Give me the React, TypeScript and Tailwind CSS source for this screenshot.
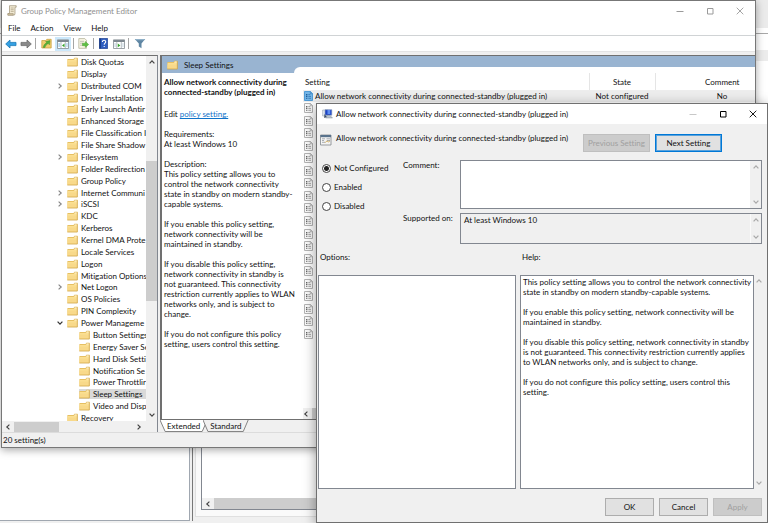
import React from "react";

type TreeNode = { label: string; level: 1 | 2; mark?: "closed" | "open"; selected?: boolean };

const tree: TreeNode[] = [
  { label: "Disk Quotas", level: 1 },
  { label: "Display", level: 1 },
  { label: "Distributed COM", level: 1, mark: "closed" },
  { label: "Driver Installation", level: 1 },
  { label: "Early Launch Antir", level: 1 },
  { label: "Enhanced Storage", level: 1 },
  { label: "File Classification I", level: 1 },
  { label: "File Share Shadow", level: 1 },
  { label: "Filesystem", level: 1, mark: "closed" },
  { label: "Folder Redirection", level: 1 },
  { label: "Group Policy", level: 1 },
  { label: "Internet Communi", level: 1, mark: "closed" },
  { label: "iSCSI", level: 1, mark: "closed" },
  { label: "KDC", level: 1 },
  { label: "Kerberos", level: 1 },
  { label: "Kernel DMA Prote", level: 1 },
  { label: "Locale Services", level: 1 },
  { label: "Logon", level: 1 },
  { label: "Mitigation Options", level: 1 },
  { label: "Net Logon", level: 1, mark: "closed" },
  { label: "OS Policies", level: 1 },
  { label: "PIN Complexity", level: 1 },
  { label: "Power Manageme", level: 1, mark: "open" },
  { label: "Button Settings", level: 2 },
  { label: "Energy Saver Se", level: 2 },
  { label: "Hard Disk Setti", level: 2 },
  { label: "Notification Se", level: 2 },
  { label: "Power Throttlir", level: 2 },
  { label: "Sleep Settings", level: 2, selected: true },
  { label: "Video and Disp", level: 2 },
  { label: "Recovery", level: 1 },
];

const settingName = "Allow network connectivity during connected-standby (plugged in)";

const rotations = { up: "", down: "rotate-180", left: "-rotate-90", right: "rotate-90" };

function Arrow({ dir, className = "" }: { dir: keyof typeof rotations; className?: string }) {
  return (
    <svg viewBox="0 0 6 6" className={`size-[6px] shrink-0 ${rotations[dir]} ${className}`} fill="none" stroke="currentColor" strokeWidth="1.2">
      <path d="M0.6 4.4 3 1.8l2.4 2.6" />
    </svg>
  );
}

function Folder({ className = "" }: { className?: string }) {
  return (
    <svg viewBox="0 0 11 10" className={`h-[10px] w-[11px] shrink-0 ${className}`}>
      <path d="M.5 2h6l1-1.2h3V9H.5z" fill="#dfb652" />
      <path d="M.5 2.8h6.3l1-1h2.2V8.6H.5z" fill="#fbdf92" />
      <path d="M.5 4.6h9.5v4H.5z" fill="#f8d98a" />
      <path d="M.3 9.1h10V1.2" fill="none" stroke="#d3a848" strokeWidth=".7" />
      <path d="M7.5 1.9h2.2" stroke="#fff" strokeWidth=".7" />
    </svg>
  );
}

function SettingIcon({ selected }: { selected?: boolean }) {
  const line = selected ? "#2c74b3" : "#8d8d8d";
  return (
    <svg viewBox="0 0 9 10" className="h-[10px] w-[9px] shrink-0">
      <path d="M.5.5h6l2 2v7h-8z" fill={selected ? "#74b5e6" : "#fafafa"} stroke={selected ? "#4f9bd6" : "#b4b4b4"} />
      <path d="M6.3.5v2.2h2.2" fill="none" stroke={line} strokeWidth=".6" />
      <path d="M2 3.6h1.4M2 5.4h1.4M2 7.3h1.4" stroke={selected ? "#1c5d99" : "#666"} strokeWidth="1.1" />
      <path d="M4.3 3.6h2M4.3 5.4h2.7M4.3 7.3h2.7" stroke={line} strokeWidth=".8" />
    </svg>
  );
}

function Caption({ muted }: { muted?: boolean }) {
  const c = muted ? "text-[#9a9a9a]" : "text-black";
  return (
    <div className={`flex items-center gap-[22px] ${c}`}>
      <button aria-label="Minimize" className={`grid size-[8px] place-items-center ${muted ? "" : "text-[#c8c8c8]"}`}>
        <svg viewBox="0 0 8 8" className="size-[8px]" stroke="currentColor"><path d="M.5 4.5h7" /></svg>
      </button>
      <button aria-label="Maximize" className="grid size-[8px] place-items-center">
        <svg viewBox="0 0 8 8" className="size-[8px]" fill="none" stroke="currentColor"><path d="M1.5 1.500h5.500v5.500H1.500z" /></svg>
      </button>
      <button aria-label="Close" className="grid size-[8px] place-items-center">
        <svg viewBox="0 0 8 8" className="size-[8px]" stroke="currentColor" strokeWidth=".9"><path d="m.7.7 6.6 6.6M7.3.7.7 7.3" /></svg>
      </button>
    </div>
  );
}

function Toolbar() {
  const sep = <span className="h-[11px] w-px bg-[#a5a5a5]" />;
  return (
    <div className="flex h-[16px] shrink-0 items-center gap-[3px] border-b border-[#e4e4e4] bg-white pl-[3px]">
      <button aria-label="Back">
        <svg viewBox="0 0 12 10" className="h-[10px] w-[12px]"><path d="M.7 5 5 1v2.4h6v3.2H5V9z" fill="#35a0e2" stroke="#1979b8" strokeWidth=".8" /></svg>
      </button>
      <button aria-label="Forward">
        <svg viewBox="0 0 12 10" className="h-[10px] w-[12px]"><path d="M11.3 5 7 1v2.4H1v3.2h6V9z" fill="#8a8a8a" stroke="#6d6d6d" strokeWidth=".8" /></svg>
      </button>
      {sep}
      <button aria-label="Up one level" className="pl-[2px]">
        <svg viewBox="0 0 11 11" className="size-[11px]">
          <path d="M.8 2.5h4l1-1.2h4.4V10H.8z" fill="#f0cd70" stroke="#c79c38" strokeWidth=".7" />
          <path d="M2.2 9.5c.5-2.5 1.500-3.800 3.500-4.700L4.600 3.500l4.400-.9-.6 4.200-1.200-1.200C5.500 6.500 4.600 7.500 4 9.500z" fill="#56b13a" stroke="#398a22" strokeWidth=".4" />
        </svg>
      </button>
      <button aria-label="Show or hide tree" className="-mr-px grid h-[14px] w-[16px] place-items-center bg-[#cce8fb]">
        <svg viewBox="0 0 12 10" className="h-[10px] w-[12px]">
          <path d="M.5.8h11v8.700H.5z" fill="#fff" stroke="#838b92" strokeWidth=".8" /><path d="M.5 1h11v2H.5z" fill="#7e8890" />
          <path d="M4 3v6.500M8.300 3v6.500" stroke="#9aa3aa" strokeWidth=".7" /><path d="M1.300 5h1.800M1.300 7h1.800M9.200 5h1.500M9.200 7h1.500" stroke="#4da0d8" strokeWidth=".8" /><path d="M7.500 4.600v3.600L5 6.400z" fill="#35a52a" />
        </svg>
      </button>
      {sep}
      <button aria-label="Export list" className="px-px">
        <svg viewBox="0 0 11 11" className="size-[11px]">
          <path d="M.8.600h6l1.700 1.700v8H.8z" fill="#fbf8e6" stroke="#aaa78f" strokeWidth=".7" /><path d="M2 3.300h4M2 5.200h3M2 7.200h3" stroke="#a9a9a0" strokeWidth=".7" />
          <path d="M4.500 5.200h2.800V3.400l3.400 3.100-3.400 3V7.700H4.500z" fill="#5fc043" stroke="#3b9427" strokeWidth=".4" />
        </svg>
      </button>
      {sep}
      <button aria-label="Help" className="pl-[2px]">
        <svg viewBox="0 0 9 11" className="h-[11px] w-[9px]">
          <path d="M.4.400h8.200v10.200H.4z" fill="#2e5dc0" stroke="#1b3d8c" strokeWidth=".7" /><path d="M.4.400h1.400v10.200H.4z" fill="#16367f" />
          <path d="M3.400 3.900c0-2.300 3.300-2.200 3.300-.1 0 1.400-1.500 1.400-1.500 3M5.200 7.900v1.100" fill="none" stroke="#fff" strokeWidth="1.100" />
        </svg>
      </button>
      <button aria-label="Show or hide action pane" className="pl-[2px]">
        <svg viewBox="0 0 12 10" className="h-[10px] w-[12px]">
          <path d="M.5.8h11v8.700H.5z" fill="#fff" stroke="#838b92" strokeWidth=".8" /><path d="M.5 1h11v2H.5z" fill="#7e8890" />
          <path d="M3.800 3v6.500M8.300 3v6.500" stroke="#9aa3aa" strokeWidth=".7" /><path d="M1.300 5h1.800M1.300 7h1.800M9.200 5h1.500M9.200 7h1.500" stroke="#9ab7cc" strokeWidth=".8" /><path d="M4.800 4.600v3.600l2.500-1.800z" fill="#35a52a" />
        </svg>
      </button>
      {sep}
      <button aria-label="Filter" className="pl-[2px]">
        <svg viewBox="0 0 12 11" className="h-[11px] w-[12px]"><path d="M.8 1h10.400L7.500 5.500v4.700L4.800 8.500v-3z" fill="#5f86a3" /><path d="M.8 1h10.400l-1 1.300H1.900z" fill="#8fb0c8" /></svg>
      </button>
    </div>
  );
}

function TreePane() {
  return (
    <nav className="flex w-[156px] shrink-0 flex-col border-t border-r border-[#828790] border-t-[#707070] bg-white">
      <div className="flex min-h-0 flex-1">
        <div className="min-w-0 flex-1 overflow-hidden">
          <ul className="grid h-[368px] auto-rows-fr">
            {tree.map((n) => (
              <li key={n.label} className={`flex min-h-0 items-center ${n.level === 1 ? "pl-[55px]" : "pl-[67px]"}`}>
                <span className="w-[10px] shrink-0">
                  {n.mark && <Arrow dir={n.mark === "open" ? "down" : "right"} className={n.mark === "open" ? "text-[#333]" : "text-[#888]"} />}
                </span>
                <span className={`flex items-center gap-[3px] ${n.selected ? "flex-1 bg-[#d9d9d9]" : ""}`}>
                  <Folder />
                  <span className="whitespace-nowrap">{n.label}</span>
                </span>
              </li>
            ))}
          </ul>
        </div>
        <div className="flex w-[11px] flex-col items-center justify-between bg-[#f0f0f0] py-[3px] text-[#444]">
          <Arrow dir="up" />
          <span className="mt-[96px] mb-auto h-[140px] w-full bg-[#cdcdcd]" />
          <Arrow dir="down" />
        </div>
      </div>
      <div className="flex h-[11px] items-center bg-[#f0f0f0] px-[3px] text-[#444]">
        <Arrow dir="left" />
        <span className="ml-[3px] h-[10px] w-[45px] bg-[#cdcdcd]" />
        <Arrow dir="right" className="mr-[12px] ml-auto" />
      </div>
    </nav>
  );
}

function Description() {
  return (
    <article className="flex w-[141px] shrink-0 flex-col gap-[10px] pt-[4px] pl-[2px]">
      <h2 className="mb-[2px] font-bold">
        Allow network connectivity during<br />connected-standby (plugged in)
      </h2>
      <p>Edit <a href="#policy" className="text-[#0f72c9] underline">policy setting.</a></p>
      <p>Requirements:<br />At least Windows 10</p>
      <p>Description:<br />This policy setting allows you to<br />control the network connectivity<br />state in standby on modern standby-<br />capable systems.</p>
      <p>If you enable this policy setting,<br />network connectivity will be<br />maintained in standby.</p>
      <p>If you disable this policy setting,<br />network connectivity in standby is<br />not guaranteed. This connectivity<br />restriction currently applies to WLAN<br />networks only, and is subject to<br />change.</p>
      <p>If you do not configure this policy<br />setting, users control this setting.</p>
    </article>
  );
}

function SettingsTable() {
  return (
    <div className="flex min-w-0 flex-1 flex-col">
      <table className="w-full table-fixed border-collapse">
        <colgroup><col /><col className="w-[66px]" /><col className="w-[100px]" /></colgroup>
        <thead>
          <tr className="h-[17px]">
            <th className="border-r border-[#e5e5e5] pt-0 pl-[2px] text-left font-normal">Setting</th>
            <th className="border-r border-[#e5e5e5] text-center font-normal">State</th>
            <th className="pl-[34px] text-center font-normal">Comment</th>
          </tr>
        </thead>
        <tbody>
          <tr className="h-[12px] bg-[#ededed]">
            <td>
              <span className="flex items-center gap-[2px] pl-px"><SettingIcon selected /><span className="whitespace-nowrap">{settingName}</span></span>
            </td>
            <td className="text-center">Not configured</td>
            <td className="pl-[34px] text-center">No</td>
          </tr>
        </tbody>
      </table>
      <div className="grid h-[238px] auto-rows-fr pl-px">
        {Array.from({ length: 19 }, (_, i) => <span key={i} className="flex items-center"><SettingIcon /></span>)}
      </div>
      <div className="mt-auto flex h-[11px] items-center bg-[#f0f0f0] text-[#444]">
        <Arrow dir="left" />
        <span className="ml-[3px] h-full flex-1 bg-[#cdcdcd]" />
      </div>
    </div>
  );
}

function EditorWindow() {
  return (
    <section className="absolute top-0 right-[12px] bottom-[75px] left-px flex flex-col border border-[#777] bg-[#f0f0f0] shadow-[0_2px_8px_rgba(0,0,0,0.35)]">
      <header className="flex h-[19px] shrink-0 items-center bg-white pr-[11px] pl-[5px] text-[#8f8f8f]">
        <svg viewBox="0 0 10 11" className="mr-[4px] h-[11px] w-[10px]">
          <path d="M2.500.700h6.700v1.500H8v6.300l-.5 1.500H1V8.500h1.500z" fill="#f1ead4" stroke="#9c8f76" strokeWidth=".7" />
          <path d="M3.700 3h3M3.700 4.700h3M3.700 6.400h3" stroke="#a99c80" strokeWidth=".7" /><path d="M.8 8.500h5.400v1.800H.8z" fill="#cdbf9d" stroke="#9c8f76" strokeWidth=".5" />
        </svg>
        <h1 className="mr-auto">Group Policy Management Editor</h1>
        <Caption muted />
      </header>
      <nav className="flex h-[16px] shrink-0 items-center gap-[10px] border-b border-[#d0d3d5] bg-white pl-[6px]">
        <button>File</button><button>Action</button><button>View</button><button>Help</button>
      </nav>
      <Toolbar />
      <div className="flex min-h-0 flex-1 gap-[2px] pt-[3px]">
        <TreePane />
        <main className="flex min-w-0 flex-1 flex-col">
          <div className="flex min-h-0 flex-1 flex-col border-t border-b border-l-2 border-[#707070] bg-white">
            <div className="flex h-[17px] shrink-0 bg-[#99b4d1]">
              <div className="flex w-[132px] items-center gap-[6px] pl-[5px]"><Folder /><h2>Sleep Settings</h2></div>
              <div className="mt-[11px] flex-1 rounded-tl-[6px] bg-white" />
            </div>
            <div className="flex min-h-0 flex-1"><Description /><SettingsTable /></div>
          </div>
          <div className="flex h-[12px] shrink-0">
            <Tab label="Extended" active /><Tab label="Standard" />
          </div>
        </main>
      </div>
      <footer className="h-[15px] shrink-0 border-t border-[#dcdcdc] pl-px leading-[15px]">20 setting(s)</footer>
    </section>
  );
}

function Tab({ label, active }: { label: string; active?: boolean }) {
  return (
    <button className="relative isolate -mr-[4px] h-[12px] px-[7px] leading-[12px]">
      <svg viewBox="0 0 46 12" preserveAspectRatio="none" className="absolute inset-0 -z-10 size-full">
        <path d="M0 0 5 11.500h36L46 0" fill={active ? "#fff" : "#f0f0f0"} stroke="#777" strokeWidth=".9" />
      </svg>
      {label}
    </button>
  );
}

function Scroll({ className = "" }: { className?: string }) {
  return (
    <div className={`flex shrink-0 flex-col items-center justify-between bg-[#f0f0f0] text-[#a8a8a8] ${className}`}>
      <Arrow dir="up" /><Arrow dir="down" />
    </div>
  );
}

const pushButton = "h-[18px] border border-[#adadad] bg-[#e1e1e1] disabled:border-[#bfbfbf] disabled:bg-[#cccccc] disabled:text-[#a0a0a0]";

function PolicyDialog() {
  return (
    <section role="dialog" aria-labelledby="dialog-title" className="absolute top-[103px] right-0 bottom-0 left-[316px] flex flex-col border border-[#707070] bg-[#f0f0f0] shadow-[0_3px_12px_rgba(0,0,0,0.4)]">
      <header className="flex h-[20px] shrink-0 items-center bg-white pr-[10px] pl-[5px]">
        <svg viewBox="0 0 11 10" className="mr-[3px] h-[10px] w-[11px]">
          <path d="M.6 1h5.500v6H.6z" fill="#dfe6ee" stroke="#9aa7b5" strokeWidth=".6" /><path d="M3 .700h6.800v5.500H3z" fill="#1c43c4" stroke="#8fa0b8" strokeWidth=".6" />
          <path d="M5.500 1h2.800v4H5.500z" fill="#5f8ef0" /><path d="M5.300 6.300h2.600L10.500 9H3.700z" fill="#b9c3ce" stroke="#6d7885" strokeWidth=".4" /><path d="m2.400 5 2.300 3-2.500 1z" fill="#3a4c66" />
        </svg>
        <h2 id="dialog-title" className="mr-auto">{settingName}</h2>
        <Caption />
      </header>
      <div className="flex shrink-0 items-start pt-[10px] pr-[45px] pl-[3px]">
        <svg viewBox="0 0 12 12" className="mr-[4px] size-[12px]">
          <path d="M.5 1h10.500v10H.5z" fill="#f4f4f4" stroke="#80868c" strokeWidth=".8" /><path d="M.5 1h10.500v2.200H.5z" fill="#59728c" />
          <path d="M2 4.800h3M2 6.500h2M2 8.300h3M6.500 4.800H10M7 6.500h3" stroke="#a0a6ac" strokeWidth=".9" /><path d="m5 8.800 2-2 1.300 1.300L10 6.800" fill="none" stroke="#c7a047" strokeWidth=".8" />
        </svg>
        <p className="mr-auto leading-[8px]">{settingName}</p>
        <div className="flex gap-[5px]">
          <button disabled className={`${pushButton} w-[67px]`}>Previous Setting</button>
          <button className="h-[18px] w-[67px] border border-[#0078d7] bg-[#e1e1e1] ring-1 ring-[#0078d7]/60 ring-inset">Next Setting</button>
        </div>
      </div>
      <div className="flex shrink-0 gap-x-[8px] pt-[8px] pr-[5px] pl-[5px]">
        <fieldset className="flex w-[73px] flex-col gap-[7px] pt-[2px]">
          {["Not Configured", "Enabled", "Disabled"].map((s, i) => (
            <label key={s} className="flex h-[12px] items-center gap-[3px] whitespace-nowrap">
              <input type="radio" name="state" defaultChecked={i === 0} className="size-[9px] shrink-0 appearance-none rounded-full border border-[#444] bg-white checked:bg-[radial-gradient(circle,#222_2px,#fff_3px)]" />
              {s}
            </label>
          ))}
        </fieldset>
        <div className="grid flex-1 grid-cols-[57px_1fr] gap-y-[4px]">
          <label htmlFor="comment">Comment:</label>
          <div className="flex h-[49px] border border-[#828790]">
            <textarea id="comment" className="h-full min-w-0 flex-1 resize-none overflow-hidden bg-white px-[3px] outline-none" />
            <Scroll className="w-[11px] py-[3px]" />
          </div>
          <label htmlFor="supported">Supported on:</label>
          <div className="flex h-[31px] border border-[#828790]">
            <textarea id="supported" readOnly defaultValue="At least Windows 10" className="h-full min-w-0 flex-1 resize-none overflow-hidden px-[3px] py-px outline-none" />
            <Scroll className="w-[11px] border-l border-[#fafafa] py-[3px]" />
          </div>
        </div>
      </div>
      <div className="grid min-h-0 flex-1 grid-cols-[198px_1fr] grid-rows-[23px_1fr] gap-x-[4px] pt-[8px] pr-[3px] pl-px">
        <p className="pl-[2px]">Options:</p>
        <p className="pl-[2px]">Help:</p>
        <div className="border border-[#828790] bg-white" />
        <div className="flex min-w-0">
          <div className="flex min-w-0 flex-1 flex-col gap-[10px] border border-[#828790] bg-white pt-px pl-[2px]">
            <p className="whitespace-nowrap">This policy setting allows you to control the network connectivity<br />state in standby on modern standby-capable systems.</p>
            <p className="whitespace-nowrap">If you enable this policy setting, network connectivity will be<br />maintained in standby.</p>
            <p className="whitespace-nowrap">If you disable this policy setting, network connectivity in standby<br />is not guaranteed. This connectivity restriction currently applies<br />to WLAN networks only, and is subject to change.</p>
            <p className="whitespace-nowrap">If you do not configure this policy setting, users control this<br />setting.</p>
          </div>
          <Scroll className="w-[10px] py-[3px]" />
        </div>
      </div>
      <footer className="flex shrink-0 justify-end gap-[5px] pt-[9px] pr-[5px] pb-[6px]">
        <button className={`${pushButton} w-[49px]`}>OK</button>
        <button className={`${pushButton} w-[49px]`}>Cancel</button>
        <button disabled className={`${pushButton} w-[49px]`}>Apply</button>
      </footer>
    </section>
  );
}

function BackgroundWindow() {
  return (
    <div className="flex h-full flex-col bg-[#f0f0f0]">
      <div className="h-[28px] bg-[#ebebeb]" />
      <div className="h-[6px] border-b border-[#a8a8a8] bg-white" />
      <div className="flex min-h-0 flex-1">
        <div className="mb-[2px] w-[190px] border-r border-b border-[#a0a7b0] bg-white" />
        <div className="mb-[2px] ml-[2px] w-px bg-[#777]" />
        <div className="mb-[6px] ml-[2px] flex min-w-0 flex-1 flex-col border-b border-l border-[#e0e0e0] bg-[#fafafa] pb-[6px] pl-[5px]">
          <div className="flex flex-1 flex-col border-b border-l border-[#828790] bg-white">
            <div className="mt-[16px] h-[11px] bg-[#ececec]" />
            <div className="mt-auto flex h-[11px] items-center bg-[#f0f0f0] pl-[3px] text-[#444]">
              <Arrow dir="left" />
              <span className="ml-[3px] h-full flex-1 bg-[#cdcdcd]" />
            </div>
          </div>
        </div>
      </div>
    </div>
  );
}

export default function App() {
  return (
    <div className="relative h-screen overflow-hidden bg-white font-['Lato','Open_Sans',sans-serif] text-[8px] leading-[10px] text-[#111] [font-variant-ligatures:none]">
      <BackgroundWindow />
      <EditorWindow />
      <PolicyDialog />
    </div>
  );
}
